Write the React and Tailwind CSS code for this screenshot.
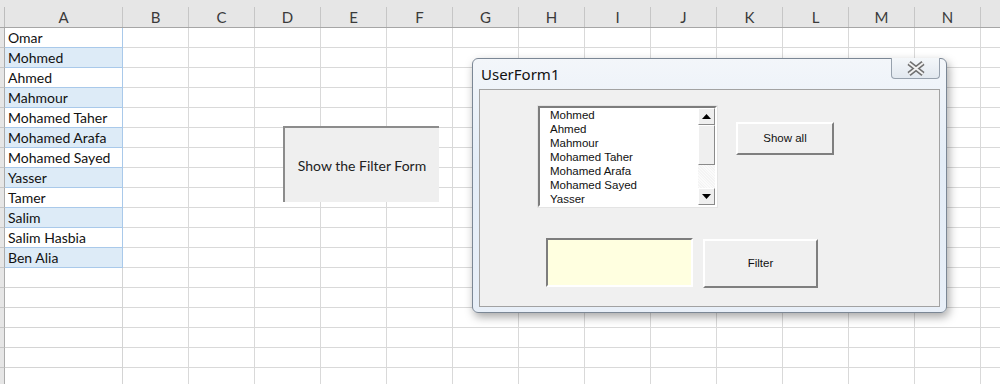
import React from "react";

const COLS = ["A", "B", "C", "D", "E", "F", "G", "H", "I", "J", "K", "L", "M", "N", ""];
const NAMES = [
  "Omar",
  "Mohmed",
  "Ahmed",
  "Mahmour",
  "Mohamed Taher",
  "Mohamed Arafa",
  "Mohamed Sayed",
  "Yasser",
  "Tamer",
  "Salim",
  "Salim Hasbia",
  "Ben Alia",
];
const LIST = ["Mohmed", "Ahmed", "Mahmour", "Mohamed Taher", "Mohamed Arafa", "Mohamed Sayed", "Yasser"];
const ROWS = 18;

function Sheet() {
  return (
    <div className="flex flex-col" style={{ fontFamily: "Lato, 'Liberation Sans', sans-serif" }}>
      <div className="flex h-[28px] bg-[#e6e6e6] border-b border-[#a6a6a6]">
        <div className="w-[5px] shrink-0 flex flex-col justify-end">
          <div className="h-[20px] border-r border-[#bdbdbd]" />
        </div>
        {COLS.map((c, i) => (
          <div
            key={i}
            className={`${i === 0 ? "w-[118px]" : "w-[66px]"} shrink-0 flex flex-col justify-end`}
          >
            <div className="h-[20px] border-r border-[#c6c6c6] flex items-center justify-center text-[15px] text-[#3a3a3a]">
              {c}
            </div>
          </div>
        ))}
      </div>
      {Array.from({ length: ROWS }).map((_, r) => {
        const name = NAMES[r];
        const inA = r < NAMES.length;
        const blue = inA && r % 2 === 1;
        return (
          <div key={r} className="flex h-[20px]">
            <div className="w-[5px] shrink-0 bg-[#e6e6e6] border-r border-b border-r-[#ababab] border-b-[#c6c6c6]" />
            {COLS.map((c, i) => {
              if (i === 0) {
                return (
                  <div
                    key={i}
                    className={`w-[118px] shrink-0 border-r border-b pl-[3px] flex items-center text-[14px] leading-[19px] text-[#111] whitespace-nowrap ${
                      inA ? "border-[#a9c9ea]" : "border-[#d4d4d4]"
                    } ${blue ? "bg-[#ddebf7]" : "bg-white"}`}
                  >
                    {name}
                  </div>
                );
              }
              return <div key={i} className="w-[66px] shrink-0 border-r border-b border-[#d9d9d9] bg-white" />;
            })}
          </div>
        );
      })}
    </div>
  );
}

function Arrow({ up }) {
  return (
    <svg width="9" height="5" viewBox="0 0 9 5">
      {up ? <polygon points="4.5,0 9,5 0,5" fill="#000" /> : <polygon points="0,0 9,0 4.5,5" fill="#000" />}
    </svg>
  );
}

function ListBox() {
  return (
    <div className="w-[179px] h-[101px] shrink-0 flex bg-white border-2 border-t-[#7d7d7d] border-l-[#7d7d7d] border-b-white border-r-white outline outline-1 outline-[#e4e4e4]">
      <div className="flex-1 pl-[10px] overflow-hidden">
        {LIST.map((n) => (
          <div key={n} className="h-[14px] leading-[14px] text-[11.5px] text-[#111] whitespace-nowrap">
            {n}
          </div>
        ))}
      </div>
      <div className="w-[17px] flex flex-col bg-[repeating-linear-gradient(45deg,#f4f4f4_0px,#f4f4f4_1px,#fbfbfb_1px,#fbfbfb_2px)]">
        <div className="h-[17px] bg-[#efefef] border border-t-white border-l-white border-b-[#8a8a8a] border-r-[#8a8a8a] flex items-center justify-center">
          <Arrow up />
        </div>
        <div className="h-[40px] bg-[#efefef] border border-t-white border-l-white border-b-[#8a8a8a] border-r-[#8a8a8a]" />
        <div className="flex-1" />
        <div className="h-[17px] bg-[#efefef] border border-t-white border-l-white border-b-[#8a8a8a] border-r-[#8a8a8a] flex items-center justify-center">
          <Arrow />
        </div>
      </div>
    </div>
  );
}

function RaisedButton({ label, className }) {
  return (
    <div
      className={`${className} shrink-0 bg-[#f0f0f0] border-2 border-t-white border-l-white border-b-[#7f7f7f] border-r-[#7f7f7f] flex items-center justify-center text-[11.5px] text-[#111]`}
    >
      {label}
    </div>
  );
}

function UserForm() {
  return (
    <div
      className="absolute left-[472px] top-[58px] w-[475px] h-[255px] rounded-[6px] border border-[#7b8795] bg-[linear-gradient(180deg,#f3f6fa_0%,#e4edf7_40%,#e8eff8_100%)] shadow-[2px_4px_10px_rgba(0,0,0,0.35)] flex flex-col px-[6px] pb-[5px]"
      style={{ fontFamily: "'Liberation Sans', Arial, sans-serif" }}
    >
      <div className="h-[30px] shrink-0 flex items-center relative">
        <span className="text-[15px] text-[#111] pl-[2px] pt-[1px]" style={{ fontFamily: "'Noto Sans', 'Liberation Sans', sans-serif" }}>
          UserForm1
        </span>
        <div className="absolute right-[0px] top-[-1px] w-[49px] h-[21px] rounded-b-[4px] border border-t-0 border-[#97a1ad] bg-[linear-gradient(180deg,#f4f7fa,#e2e8ef)] flex items-center justify-center">
          <svg width="20" height="15" viewBox="0 0 20 15">
            <path d="M3 2 L17 13 M17 2 L3 13" stroke="#707070" strokeWidth="5" strokeLinecap="butt" />
            <path d="M3 2 L17 13 M17 2 L3 13" stroke="#f2f2f2" strokeWidth="2" strokeLinecap="butt" />
          </svg>
        </div>
      </div>
      <div className="flex-1 bg-[#f0f0f0] border border-[#a2a2a2] flex flex-col">
        <div className="flex items-start pt-[16px] pl-[58px]">
          <ListBox />
          <RaisedButton label="Show all" className="ml-[19px] mt-[16px] w-[98px] h-[33px]" />
        </div>
        <div className="flex items-start mt-[31px] pl-[66px]">
          <div className="w-[147px] h-[49px] shrink-0 bg-[#ffffe0] border-2 border-t-[#7d7d7d] border-l-[#7d7d7d] border-b-white border-r-white" />
          <RaisedButton label="Filter" className="ml-[10px] mt-[1px] w-[115px] h-[49px]" />
        </div>
      </div>
    </div>
  );
}

export default function App() {
  return (
    <div className="relative w-[1000px] h-[384px] overflow-hidden bg-white">
      <Sheet />
      <div
        className="absolute left-[283px] top-[126px] w-[156px] h-[76px] bg-[#efefef] border-l-2 border-t-2 border-[#8c8c8c] flex items-center justify-center text-[14px] text-[#222]"
        style={{ fontFamily: "Lato, 'Liberation Sans', sans-serif" }}
      >
        Show the Filter Form
      </div>
      <UserForm />
    </div>
  );
}
